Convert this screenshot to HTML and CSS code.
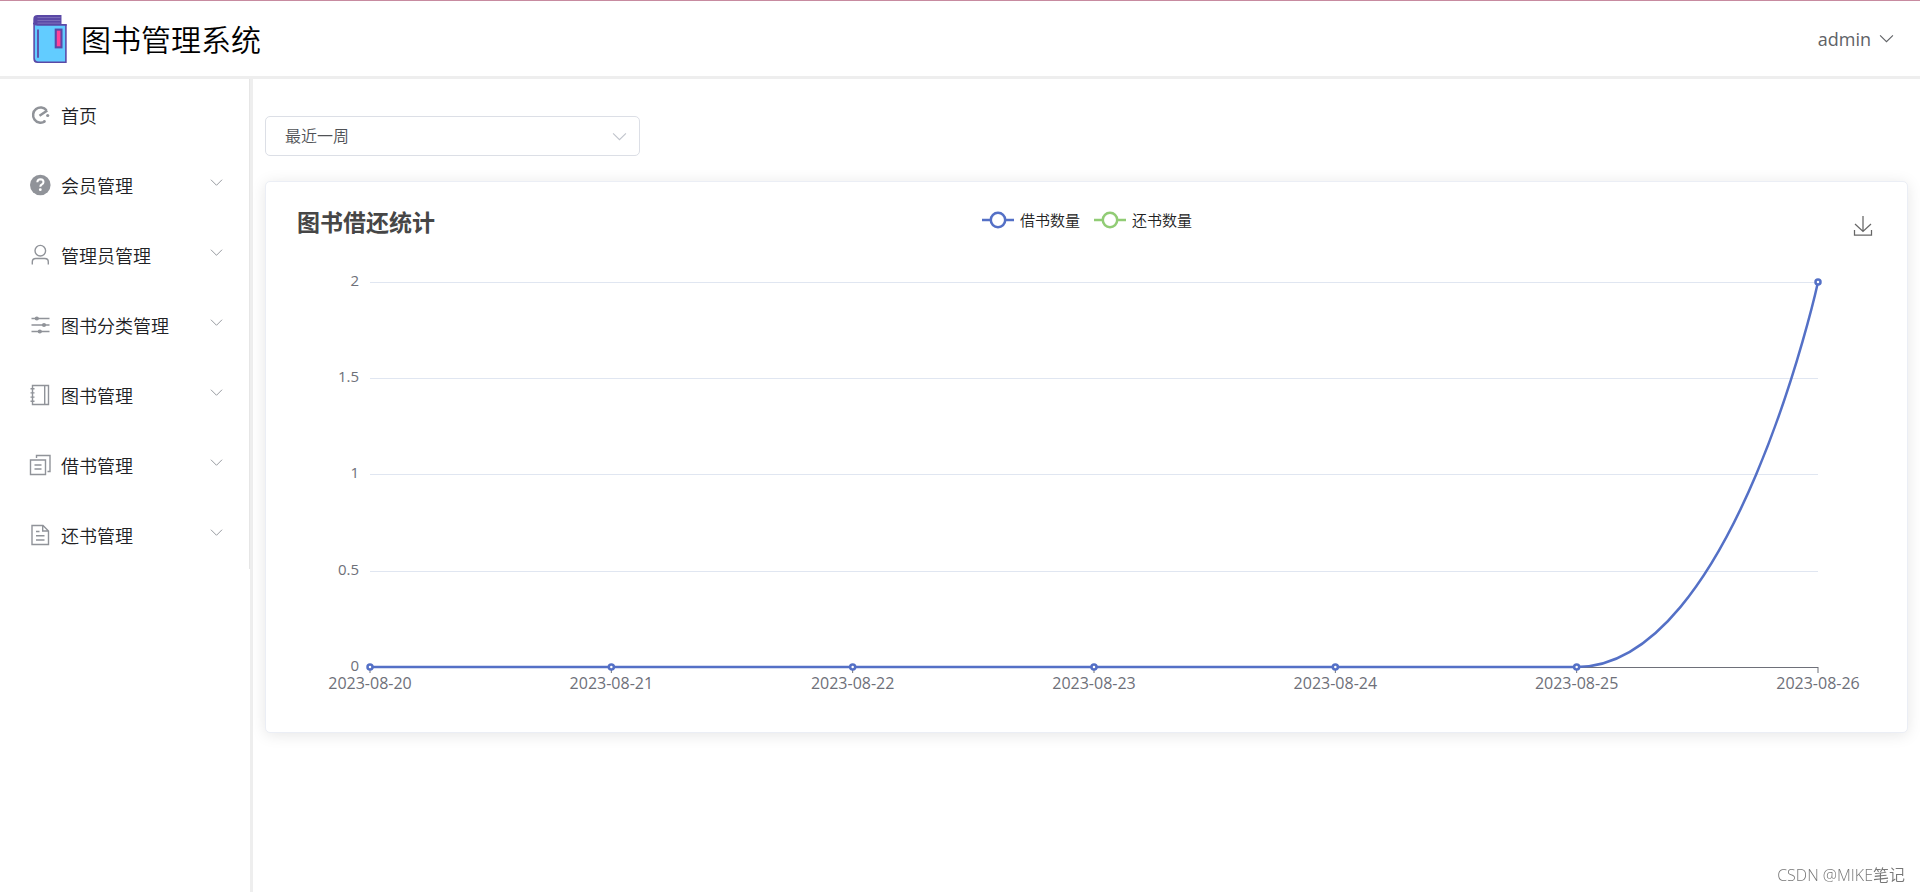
FILE: index.html
```html
<!DOCTYPE html>
<html lang="zh-CN">
<head>
<meta charset="utf-8">
<title>图书管理系统</title>
<link rel="stylesheet" href="styles.css">
</head>
<body>
<svg class="defs" width="0" height="0" aria-hidden="true">
  <symbol id="chevron" viewBox="0 0 14 14"><path d="M1 4l6 6 6-6" fill="none" stroke="currentColor" stroke-width="1"/></symbol>
</svg>
<header class="header">
  <div class="brand">
    <svg class="logo" viewBox="1 1 32 46" aria-hidden="true">
      <path d="M5 1h23v9h5v37H5q-4 0-4-4V5q0-4 4-4z" fill="#5a48a6"/>
      <path d="M5 3.500h22M5 6.200h22M5 8.800h22" stroke="#8072bd" stroke-width=".9"/>
      <path d="M2.500 10.500h29v35H6q-3.500 0-3.500-3.500z" fill="#62ccff"/>
      <path d="M1 8.500q1 2 4 2h28M5.500 15v27" fill="none" stroke="#5a48a6" stroke-width="1.700"/>
      <rect x="22.500" y="15" width="5.500" height="17" fill="#ff4298" stroke="#5a48a6" stroke-width="2"/>
    </svg>
    <h1 class="brand-name">图书管理系统</h1>
  </div>
  <button class="user" type="button">admin<svg class="user-arrow" aria-hidden="true"><use href="#chevron"/></svg></button>
</header>
<div class="body">
  <aside class="sidebar">
    <nav class="menu" aria-label="主菜单">
      <a class="item" href="#">
        <svg class="icon" viewBox="0 0 24 24"><path d="M18.500 7.200A7.600 7.600 0 1 0 16.800 18.500M11.500 12.800L19.300 7.500" fill="none" stroke="currentColor" stroke-width="2.500"/><circle cx="19.700" cy="12.500" r="1.600" fill="currentColor"/><circle cx="16.400" cy="18.300" r="1.300" fill="currentColor"/></svg>
        <span class="label">首页</span>
      </a>
      <button class="item" type="button">
        <svg class="icon" viewBox="0 0 24 24"><circle cx="12.300" cy="12" r="10.300" fill="currentColor"/><path d="M9.300 9.200q.2-3 3.200-3 3 .1 3 2.800 0 1.500-1.700 2.500-1.500.8-1.500 2.300" fill="none" stroke="#fff" stroke-width="2"/><circle cx="12.300" cy="16.700" r="1.400" fill="#fff"/></svg>
        <span class="label">会员管理</span><svg class="arrow"><use href="#chevron"/></svg>
      </button>
      <button class="item" type="button">
        <svg class="icon" viewBox="0 0 24 24"><g fill="none" stroke="currentColor" stroke-width="1.400"><circle cx="12.300" cy="7.700" r="5.300"/><path d="M4.300 21.500V19q0-3.500 3.500-3.500h9q3.500 0 3.500 3.500v2.500"/></g></svg>
        <span class="label">管理员管理</span><svg class="arrow"><use href="#chevron"/></svg>
      </button>
      <button class="item" type="button">
        <svg class="icon" viewBox="0 0 24 24"><path d="M3.500 5.500h18M3.500 12h18M3.500 18.500h18" stroke="currentColor" stroke-width="1.400"/><g fill="currentColor"><circle cx="8.800" cy="5.500" r="2.100"/><circle cx="16" cy="12" r="2.100"/><circle cx="11.800" cy="18.500" r="2.100"/></g></svg>
        <span class="label">图书分类管理</span><svg class="arrow"><use href="#chevron"/></svg>
      </button>
      <button class="item" type="button">
        <svg class="icon" viewBox="0 0 24 24"><path d="M4.500 2.500h16v19h-16zM16.700 2.500v19M2.500 5.700h4M2.500 9.900h4M2.500 14.100h4M2.500 18.300h4" fill="none" stroke="currentColor" stroke-width="1.400"/></svg>
        <span class="label">图书管理</span><svg class="arrow"><use href="#chevron"/></svg>
      </button>
      <button class="item" type="button">
        <svg class="icon" viewBox="0 0 24 24"><path d="M2.500 7h15v14.500h-15zM8.500 5V2.500h13.500V18.500h-2.500M6.500 12h7M6.500 16h7" fill="none" stroke="currentColor" stroke-width="1.400"/></svg>
        <span class="label">借书管理</span><svg class="arrow"><use href="#chevron"/></svg>
      </button>
      <button class="item" type="button">
        <svg class="icon" viewBox="0 0 24 24"><path d="M4 2.500h11l5.500 5.500v13.500H4zM14.700 2.500V8h5.700M8 8.500h3.500M8 12.700h8.500M8 17h8.500" fill="none" stroke="currentColor" stroke-width="1.400"/></svg>
        <span class="label">还书管理</span><svg class="arrow"><use href="#chevron"/></svg>
      </button>
    </nav>
  </aside>
  <main class="main">
    <div class="picker">
      <select class="select" aria-label="统计时间范围"><option>最近一周</option></select>
      <svg class="select-arrow" aria-hidden="true"><use href="#chevron"/></svg>
    </div>
    <section class="card">
      <div class="card-head">
        <h2 class="card-title">图书借还统计</h2>
        <div class="legend">
          <span class="key"><svg class="mark blue" viewBox="0 0 32 18"><path d="M0 9h32" stroke="currentColor" stroke-width="2.500"/><circle cx="16" cy="9" r="7.200" fill="#fff" stroke="currentColor" stroke-width="2.500"/></svg>借书数量</span>
          <span class="key"><svg class="mark green" viewBox="0 0 32 18"><path d="M0 9h32" stroke="currentColor" stroke-width="2.500"/><circle cx="16" cy="9" r="7.200" fill="#fff" stroke="currentColor" stroke-width="2.500"/></svg>还书数量</span>
        </div>
        <button class="save" type="button" aria-label="保存为图片"><svg class="save-icon" viewBox="0 0 20 22"><path d="M10 1v15.500M2 9l8 7.500L18 9M1.500 15v5h17v-5" fill="none" stroke="#666" stroke-width="1.250"/></svg></button>
      </div>
      <svg class="plot" role="img" aria-label="图书借还统计">
        <g class="grid">
          <line x1="0" x2="100%" y1="1.500" y2="1.500"/><line x1="0" x2="100%" y1="97.500" y2="97.500"/><line x1="0" x2="100%" y1="193.500" y2="193.500"/><line x1="0" x2="100%" y1="290.500" y2="290.500"/>
        </g>
        <g class="axis">
          <line x1="0" x2="100%" y1="386.500" y2="386.500"/>
          <line x1="0" x2="0" y1="386" y2="392"/><line x1="16.667%" x2="16.667%" y1="386" y2="392"/><line x1="33.333%" x2="33.333%" y1="386" y2="392"/><line x1="50%" x2="50%" y1="386" y2="392"/><line x1="66.667%" x2="66.667%" y1="386" y2="392"/><line x1="83.333%" x2="83.333%" y1="386" y2="392"/><line x1="100%" x2="100%" y1="386" y2="392"/>
        </g>
        <svg class="curve" y="1" width="100%" height="385" viewBox="0 0 600 100" preserveAspectRatio="none">
          <path d="M0 100H500C565 100 600 0 600 0"/>
        </svg>
        <g class="dots"><circle cx="0" cy="386" r="2.500"/><circle cx="16.667%" cy="386" r="2.500"/><circle cx="33.333%" cy="386" r="2.500"/><circle cx="50%" cy="386" r="2.500"/><circle cx="66.667%" cy="386" r="2.500"/><circle cx="83.333%" cy="386" r="2.500"/><circle cx="100%" cy="1" r="2.500"/></g>
        <g class="ylabels"><text x="-11" y="5">2</text><text x="-11" y="101">1.5</text><text x="-11" y="197">1</text><text x="-11" y="294">0.5</text><text x="-11" y="390">0</text></g>
        <g class="xlabels"><text x="0" y="408">2023-08-20</text><text x="16.667%" y="408">2023-08-21</text><text x="33.333%" y="408">2023-08-22</text><text x="50%" y="408">2023-08-23</text><text x="66.667%" y="408">2023-08-24</text><text x="83.333%" y="408">2023-08-25</text><text x="100%" y="408">2023-08-26</text></g>
      </svg>
    </section>
  </main>
</div>
<div class="watermark">CSDN @MIKE笔记</div>
</body>
</html>
```
FILE: styles.css
```css
* { box-sizing: border-box; }
body {
  margin: 0;
  min-height: 100vh;
  display: flex;
  flex-direction: column;
  background: #fff;
  font-family: "Open Sans", "Noto Sans CJK SC", sans-serif;
  border-top: 1px solid #c78ba0;
}
button { font: inherit; border: 0; background: none; padding: 0; cursor: pointer; }
.defs { position: absolute; }
.header {
  display: flex;
  justify-content: space-between;
  align-items: center;
  height: 78px;
  padding: 0 26px 0 33px;
  border-bottom: 3px solid #eee;
}
.brand { display: flex; align-items: center; gap: 14px; }
.logo { width: 34px; height: 48px; }
.brand-name { margin: 0; font-size: 30px; line-height: 40px; font-weight: 350; color: #000; padding-top: 2px; }
.user { display: flex; align-items: center; gap: 8px; font-size: 18px; color: #606266; }
.user-arrow { width: 15px; height: 15px; }
.body { display: flex; flex: 1; }
.sidebar { flex: none; width: 253px; border-right: 3px solid #eee; }
.menu { display: flex; flex-direction: column; border-right: 1px solid #e6e6e6; }
.item {
  display: flex;
  align-items: center;
  height: 70px;
  padding: 2px 26px 0 28px;
  font-size: 18px;
  line-height: 24px;
  font-weight: 350;
  color: #202124;
  text-decoration: none;
  text-align: left;
}
.icon { flex: none; width: 24px; height: 24px; margin-right: 9px; color: #909399; }
.label { flex: 1; padding-top: 2px; }
.arrow { flex: none; width: 13px; height: 13px; margin-bottom: 6px; color: #909399; }
.main { flex: 1; min-width: 0; padding: 37px 12px 0; }
.picker { display: grid; width: 375px; align-items: center; }
.select {
  grid-area: 1 / 1;
  appearance: none;
  width: 100%;
  height: 40px;
  padding: 0 40px 0 19px;
  border: 1px solid #dcdfe6;
  border-radius: 5px;
  background: #fff;
  font: 350 16px "Open Sans", "Noto Sans CJK SC", sans-serif;
  color: #505256;
}
.select-arrow { grid-area: 1 / 1; justify-self: end; width: 15px; height: 15px; margin-right: 13px; color: #c0c4cc; pointer-events: none; }
.card {
  margin-top: 25px;
  padding: 22px 34px 39px 31px;
  border: 1px solid #ebeef5;
  border-radius: 5px;
  background: #fff;
  box-shadow: 0 2px 15px rgba(0, 0, 0, 0.1);
}
.card-head { display: grid; grid-template-columns: 1fr auto 1fr; align-items: center; height: 36px; }
.card-title { margin: 0; font-size: 23px; line-height: 32px; font-weight: 700; color: #464646; }
.legend { display: flex; gap: 14px; padding: 0 0 4px 4px; font-size: 15px; line-height: 20px; font-weight: 350; color: #222; }
.key { display: flex; align-items: center; gap: 6px; }
.mark { width: 32px; height: 18px; }
.blue { color: #5470c6; }
.green { color: #91cc75; }
.save { justify-self: end; }
.save-icon { display: block; width: 20px; height: 22px; margin-top: 8px; }
.plot { display: block; width: calc(100% - 128px); height: 412px; margin: 41px 55px 0 73px; overflow: visible; font-size: 15px; }
.grid line { stroke: #e0e6f1; }
.axis line { stroke: #6e7079; }
.curve { overflow: visible; }
.curve path { fill: none; stroke: #5470c6; stroke-width: 2.5px; vector-effect: non-scaling-stroke; }
.dots circle { fill: #fff; stroke: #5470c6; stroke-width: 2.5px; }
.plot text { fill: #6e7079; }
.ylabels text { text-anchor: end; }
.xlabels { font-size: 16px; }
.xlabels text { text-anchor: middle; }
.watermark { position: fixed; right: 15px; bottom: 5px; font-size: 16px; line-height: 24px; font-weight: 350; color: #777; }
```
